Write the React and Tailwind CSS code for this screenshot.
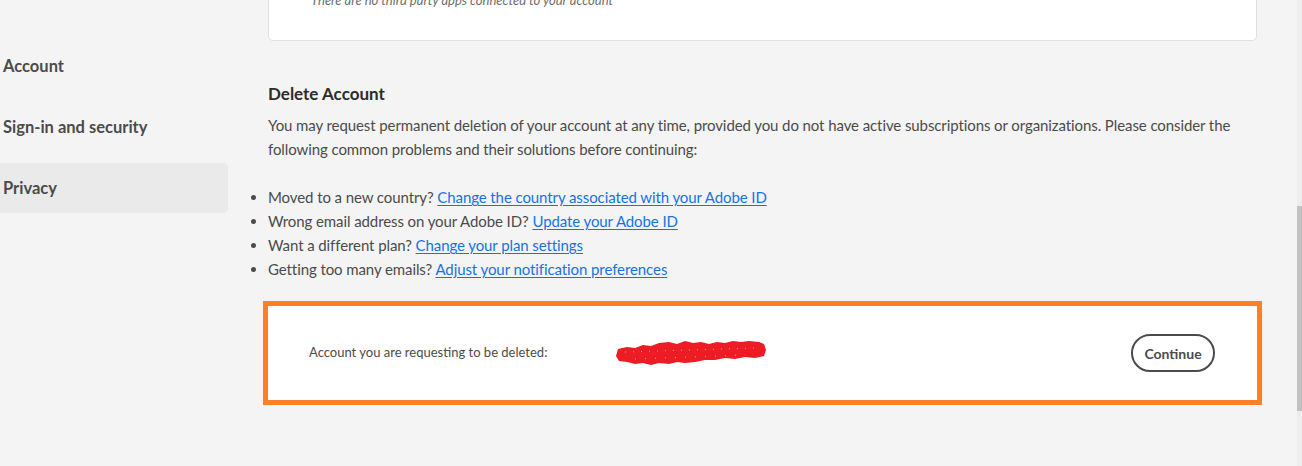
const NAV = [
  { label: "Account", active: false },
  { label: "Sign-in and security", active: false },
  { label: "Privacy", active: true },
];

const TIPS = [
  { q: "Moved to a new country?", link: "Change the country associated with your Adobe ID" },
  { q: "Wrong email address on your Adobe ID?", link: "Update your Adobe ID" },
  { q: "Want a different plan?", link: "Change your plan settings" },
  { q: "Getting too many emails?", link: "Adjust your notification preferences" },
];

// red marker scribble hiding the email address
function Scribble() {
  return (
    <svg width="152" height="26" viewBox="0 0 152 26" className="shrink-0">
      <path
        d="M1 16 L3 9 L12 7 L20 8 L28 5 L36 6 L44 3 L54 2 L62 4 L70 1 L78 3 L86 2 L94 4 L102 2 L110 3 L118 1 L126 2 L134 1 L144 2 L149 4 L151 10 L149 16 L140 18 L130 17 L120 19 L110 18 L100 20 L90 20 L80 22 L70 23 L62 22 L54 24 L44 23 L36 25 L28 23 L20 24 L12 22 L4 21 Z"
        fill="#ed1c24"
      />
      <path d="M10 12 L140 8" stroke="#ffffff" strokeWidth="0.7" strokeDasharray="1 7" opacity="0.8" />
      <path d="M20 19 L130 15" stroke="#ffffff" strokeWidth="0.7" strokeDasharray="1 9" opacity="0.8" />
    </svg>
  );
}

export default function App() {
  return (
    <div
      className="flex h-[466px] w-[1302px] overflow-hidden bg-[#f4f4f4] text-[#4b4b4b]"
      style={{ fontFamily: "Lato, 'Open Sans', sans-serif" }}
    >
      <aside className="flex w-[228px] shrink-0 flex-col gap-[11px] pt-[41px]">
        {NAV.map(item => (
          <div
            key={item.label}
            className={`flex h-[50px] items-center rounded-r-[5px] pl-[3px] text-[16.5px] font-bold text-[#4b4b4b] ${item.active ? "bg-[#eaeaea]" : ""}`}
          >
            {item.label}
          </div>
        ))}
      </aside>

      <main className="ml-[40px] flex w-[989px] shrink-0 flex-col">
        <div className="-mt-[60px] h-[101px] rounded-[5px] border border-[#e1e1e1] bg-white pl-[42px] pt-[51px]">
          <p className="text-[13px] italic leading-[16px] text-[#6e6e6e]">
            There are no third party apps connected to your account
          </p>
        </div>

        <h2 className="mt-[42px] text-[17px] font-bold leading-[22px] text-[#2c2c2c]">Delete Account</h2>
        <p className="mt-[8px] text-[15px] leading-[24px] tracking-[-0.09px]">
          You may request permanent deletion of your account at any time, provided you do not have active subscriptions or organizations. Please consider the following common problems and their solutions before continuing:
        </p>

        <ul className="mt-[24px] list-outside list-disc pl-0 text-[15px] leading-[24px] tracking-[-0.09px] marker:text-[#4b4b4b]">
          {TIPS.map(t => (
            <li key={t.q}>
              {t.q}{" "}
              <a href="#" className="text-[#1473e6] underline underline-offset-2">{t.link}</a>
            </li>
          ))}
        </ul>

        <div className="mt-[25px] flex h-[94px] items-center justify-between bg-white pl-[41px] pr-[42px] outline-[5px] outline-[#ff7f27] outline-solid">
          <div className="flex items-center">
            <span className="w-[306px] text-[13px] text-[#4b4b4b]">Account you are requesting to be deleted:</span>
            <Scribble />
          </div>
          <button
            type="button"
            className="flex h-[38px] w-[84px] items-center justify-center rounded-full border-2 border-[#4b4b4b] bg-white text-[14px] font-bold text-[#4b4b4b]"
          >
            Continue
          </button>
        </div>
      </main>

      <div className="ml-auto flex w-[5px] shrink-0 flex-col bg-[#ededed] pt-[206px]">
        <div className="h-[205px] bg-[#c1c1c1]" />
      </div>
    </div>
  );
}
